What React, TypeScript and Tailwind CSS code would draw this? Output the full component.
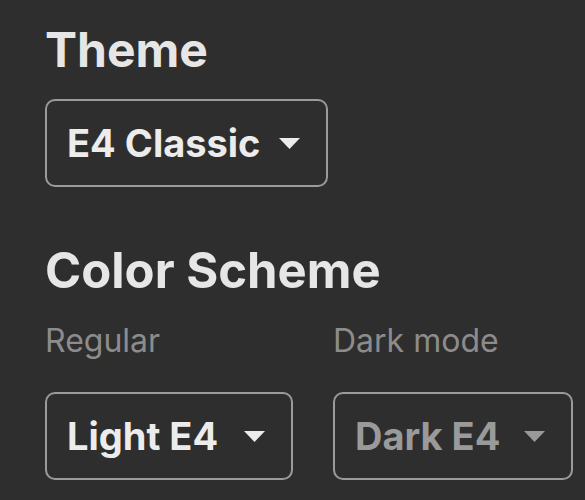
function Caret() {
  return (
    <svg width="21" height="11" viewBox="0 0 21 11" className="shrink-0">
      <path d="M0 0 L21 0 L10.5 11 Z" fill="currentColor" />
    </svg>
  )
}

function Select({ label, width, muted }: { label: string; width: string; muted?: boolean }) {
  return (
    <div
      className={
        "flex items-center justify-between h-[88px] pl-[20px] pr-[26px] border-2 border-[#9b9b9b] rounded-[10px] " +
        width +
        (muted ? " text-[#9a9a9a]" : " text-[#ececec]")
      }
    >
      <span className="text-[38px] font-bold leading-none">{label}</span>
      <Caret />
    </div>
  )
}

function App() {
  return (
    <div
      className="w-[585px] h-[500px] bg-[#2e2e2e] overflow-hidden pl-[45px] pt-[25px]"
      style={{ fontFamily: "Inter, 'Noto Sans', sans-serif" }}
    >
      <h2 className="text-[48px] font-bold leading-[49px] text-[#e6e6e6]">Theme</h2>

      <div className="mt-[25px]">
        <Select label="E4 Classic" width="w-[283px]" />
      </div>

      <h2 className="mt-[59px] text-[49px] font-bold leading-[49px] text-[#e6e6e6]">Color Scheme</h2>

      <div className="flex gap-[40px] mt-[30px]">
        <div className="flex flex-col gap-[35px]">
          <p className="text-[32px] leading-[32px] text-[#8c8c8c]">Regular</p>
          <Select label="Light E4" width="w-[248px]" />
        </div>
        <div className="flex flex-col gap-[35px]">
          <p className="text-[32px] leading-[32px] text-[#8c8c8c]">Dark mode</p>
          <Select label="Dark E4" width="w-[240px]" muted />
        </div>
      </div>
    </div>
  )
}

export default App
